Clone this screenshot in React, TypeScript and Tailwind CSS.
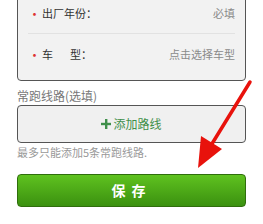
export default function App() {
  const font = { fontFamily: '"Noto Sans CJK SC", "Noto Sans", sans-serif' }

  return (
    <div className="relative w-[263px] h-[224px] overflow-hidden bg-white" style={font}>
      <div className="px-[17px]">
        {/* Vehicle info card (top cut off) */}
        <div className="-mt-[9px] rounded-[4px] border border-[#555] bg-[#f2f2f2] pb-[5px]">
          <div className="mx-[10px] flex h-[42px] items-center justify-between border-b border-[#e2e2e2] pt-[2px]">
            <div className="flex items-center text-[11px] text-[#333]">
              <span className="mr-[1px] text-[13px] leading-none text-[#d33]">•</span>
              出厂年份：
            </div>
            <span className="text-[11px] text-[#8a8a8a]">必填</span>
          </div>
          <div className="mx-[10px] flex h-[41px] items-center justify-between">
            <div className="flex items-center text-[11px] text-[#333]">
              <span className="mr-[1px] text-[13px] leading-none text-[#d33]">•</span>
              <span>车</span>
              <span className="ml-[17px]">型：</span>
            </div>
            <span className="text-[11px] text-[#8a8a8a]">点击选择车型</span>
          </div>
        </div>

        <div className="mt-[7px] text-[12px] leading-[16px] text-[#777]">常跑线路(选填)</div>

        <div className="mt-[1px] flex h-[38px] items-center justify-center rounded-[4px] border border-[#555] bg-[#f0f0f0]">
          <svg width="10" height="10" viewBox="0 0 10 10" className="mr-[2px]">
            <rect x="4" y="0" width="2.4" height="10" fill="#3f8f4a" />
            <rect x="0" y="3.8" width="10" height="2.4" fill="#3f8f4a" />
          </svg>
          <span className="text-[12px] text-[#3f8f4a]">添加路线</span>
        </div>

        <div className="mt-[1px] text-[11px] leading-[16px] text-[#999]">最多只能添加5条常跑线路.</div>

        <button className="mt-[14px] flex h-[33px] w-full items-center justify-center rounded-[4px] border border-[#2f6e0c] bg-gradient-to-b from-[#5fc21f] to-[#3b9110] text-[14px] font-bold tracking-[6px] text-white">
          保存
        </button>
      </div>

      {/* Red annotation arrow */}
      <svg className="absolute left-0 top-0" width="263" height="224" viewBox="0 0 263 224">
        <line x1="250" y1="82" x2="210" y2="147" stroke="#e8120c" strokeWidth="3.5" strokeLinecap="round" />
        <polygon points="198,168 201,136 222,149" fill="#e8120c" />
      </svg>
    </div>
  )
}
